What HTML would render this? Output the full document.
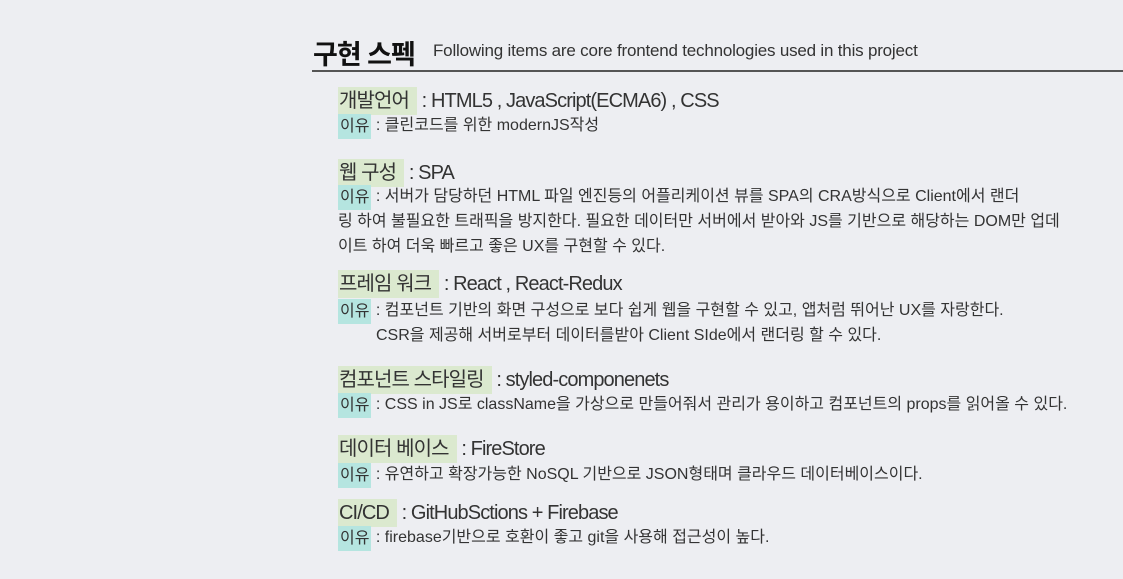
<!DOCTYPE html>
<html><head><meta charset="utf-8">
<style>
html,body{margin:0;padding:0;}
body{width:1123px;height:579px;background:#edeef2;position:relative;overflow:hidden;font-family:"Liberation Sans","Noto Sans CJK KR",sans-serif;color:#333;}
.a{position:absolute;white-space:nowrap;}
.t{left:313px;top:33px;font-size:27px;font-weight:bold;color:#111;letter-spacing:-1px;}
.st{left:433px;top:41px;font-size:17px;color:#333;letter-spacing:-0.2px;}
.line{position:absolute;left:312px;top:70px;width:811px;height:2px;background:#555;}
.h{left:338px;font-size:20px;letter-spacing:-0.9px;color:#333;line-height:28px;}
.h b{font-weight:normal;background:#dbe9cf;padding:0 8px 0 1px;display:inline-block;}
.r{left:338px;font-size:16px;letter-spacing:0px;line-height:24.5px;color:#333;}
.r i{font-style:normal;background:#b5e5e0;padding:0 2px;display:inline-block;line-height:25px;vertical-align:top;}
</style></head><body>
<div class="a t">구현 스펙</div>
<div class="a st">Following items are core frontend technologies used in this project</div>
<div class="line"></div>

<div class="a h" style="top:87px"><b>개발언어</b> : HTML5 , JavaScript(ECMA6) , CSS</div>
<div class="a r" style="top:114px"><i>이유</i> : 클린코드를 위한 modernJS작성</div>

<div class="a h" style="top:159px"><b>웹 구성</b> : SPA</div>
<div class="a r" style="top:185px"><i>이유</i> :  서버가 담당하던 HTML 파일 엔진등의 어플리케이션 뷰를 SPA의 CRA방식으로 Client에서 랜더<br>링 하여 불필요한 트래픽을 방지한다. 필요한 데이터만 서버에서 받아와 JS를 기반으로 해당하는 DOM만 업데<br>이트 하여 더욱 빠르고 좋은 UX를 구현할 수 있다.</div>

<div class="a h" style="top:270px"><b>프레임 워크</b> : React , React-Redux</div>
<div class="a r" style="top:299px"><i>이유</i> : 컴포넌트 기반의 화면 구성으로 보다 쉽게 웹을 구현할 수 있고, 앱처럼 뛰어난 UX를 자랑한다.<br><span style="padding-left:38px">CSR을 제공해 서버로부터 데이터를받아 Client SIde에서 랜더링 할 수 있다.</span></div>

<div class="a h" style="top:366px"><b>컴포넌트 스타일링</b> : styled-componenets</div>
<div class="a r" style="top:393px"><i>이유</i> : CSS in JS로 className을 가상으로 만들어줘서 관리가 용이하고 컴포넌트의 props를 읽어올 수 있다.</div>

<div class="a h" style="top:435px"><b>데이터 베이스</b> : FireStore</div>
<div class="a r" style="top:463px"><i>이유</i> : 유연하고 확장가능한 NoSQL 기반으로 JSON형태며 클라우드 데이터베이스이다.</div>

<div class="a h" style="top:499px"><b>CI/CD</b> : GitHubSctions + Firebase</div>
<div class="a r" style="top:526px"><i>이유</i> : firebase기반으로 호환이 좋고 git을 사용해 접근성이 높다.</div>
</body></html>
